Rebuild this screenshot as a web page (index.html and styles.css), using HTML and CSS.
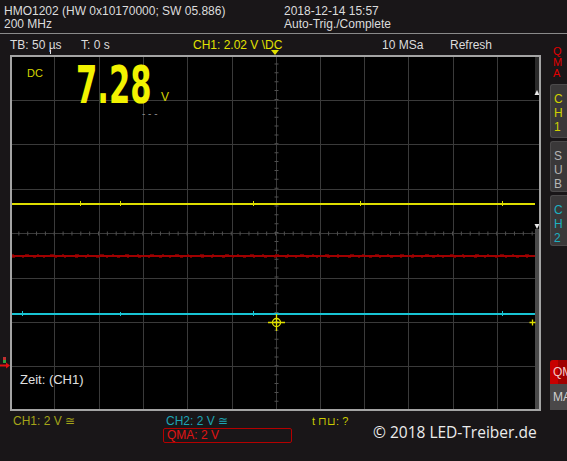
FILE: index.html
```html
<!DOCTYPE html>
<html>
<head>
<meta charset="utf-8">
<link rel="stylesheet" href="styles.css">
</head>
<body>
<div class="screen">
  <header class="info">
    <div class="info-left">
      <div>HMO1202 (HW 0x10170000; SW 05.886)</div>
      <div>200 MHz</div>
    </div>
    <div class="info-right">
      <div>2018-12-14 15:57</div>
      <div>Auto-Trig./Complete</div>
    </div>
  </header>
  <div class="body">
    <div class="content">
      <div class="status">
        <span class="s-tb">TB: 50 µs</span>
        <span class="s-t">T: 0 s</span>
        <span class="s-ch1">CH1: 2.02 V \DC</span>
        <span class="s-msa">10 MSa</span>
        <span class="s-ref">Refresh</span>
        <span class="mark-white"></span>
        <span class="mark-trig"></span>
      </div>
      <div class="scope-row">
        <div class="gutter-left">
          <svg class="gnd-marker" width="10" height="14" viewBox="0 0 10 14">
            <rect x="3" y="0" width="3" height="3" fill="#c03030"/>
            <rect x="3" y="3" width="3" height="3" fill="#30a040"/>
            <path d="M0 8.5 H7" stroke="#e01010" stroke-width="2"/>
            <path d="M6 5.5 L10 8.5 L6 11.5 Z" fill="#e01010"/>
          </svg>
        </div>
        <div class="grat">
          <svg class="grid" width="531" height="356" viewBox="0 0 531 356">
            <rect x="0" y="0" width="531" height="356" fill="#000"/>
            <g stroke="#3a3a3a" stroke-width="1">
              <path d="M44.5 2V354M89.5 2V354M133.5 2V354M177.5 2V354M222.5 2V354M310.5 2V354M354.5 2V354M398.5 2V354M443.5 2V354M487.5 2V354"/>
              <path d="M2 45.5H529M2 89.5H529M2 134.5H529M2 223.5H529M2 267.5H529M2 311.5H529"/>
              <path d="M266.5 2V354M2 178.5H529"/>
            </g>
            <g stroke="#505050">
              <path d="M0 178.5H531" stroke-width="4" stroke-dasharray="1 7.85" stroke-dashoffset="0.5"/>
              <path d="M266.5 0V356" stroke-width="4" stroke-dasharray="1 7.88" stroke-dashoffset="0.5"/>
            </g>
            <!-- right scroll strip -->
            <rect x="525" y="2" width="4" height="36" fill="#2a2a2a"/>
            <path d="M524.5 40 L527 35 L529.5 40 Z" fill="#e8e8e8"/>
            <path d="M524.5 169 L527 174 L529.5 169 Z" fill="#e8e8e8"/>
            <rect x="525" y="174" width="4" height="180" fill="#4a4a4a"/>
            <!-- traces -->
            <path d="M2 149H525" stroke="#dede00" stroke-width="2"/>
            <g stroke="#dede00" stroke-width="1">
              <path d="M70.5 146V151M110.5 146V151M243.5 146V151M350.5 146V151M492.5 146V151"/>
            </g>
            <path d="M2 201H525" stroke="#a00000" stroke-width="2"/>
            <path d="M2 202.5H525" stroke="#6a0000" stroke-width="1" stroke-dasharray="3 7 2 9"/>
            <path d="M2 199.5H525" stroke="#680000" stroke-width="1" stroke-dasharray="2 11 4 8"/>
            <path d="M2 259H525" stroke="#18c4d4" stroke-width="2"/>
            <g stroke="#18c4d4" stroke-width="1">
              <path d="M12.5 256V261M243.5 256V261M492.5 256V261M110.5 257V261"/>
            </g>
            <!-- trigger crosshair -->
            <g stroke="#e0e000" stroke-width="1.3" fill="none">
              <circle cx="266.5" cy="267.5" r="4"/>
              <path d="M258 267.5H275M266.5 259V276"/>
            </g>
            <path d="M519.5 267.5H525.5M522.5 264.5V270.5" stroke="#e0e000" stroke-width="1.3"/>
            <!-- border -->
            <rect x="1" y="1" width="529" height="354" fill="none" stroke="#a4a4a4" stroke-width="2"/>
          </svg>
          <div class="ov dc">DC</div>
          <div class="ov digits">7.28</div>
          <div class="ov unit">V</div>
          <div class="ov dashes">- - -</div>
          <div class="ov zeit">Zeit: (CH1)</div>
        </div>
        <div class="gutter-right"></div>
      </div>
      <footer class="foot">
        <div class="fcol1">
          <div class="f-ch1">CH1: 2 V ≅</div>
        </div>
        <div class="fcol2">
          <div class="f-ch2">CH2: 2 V ≅</div>
          <div class="f-qma">QMA: 2 V</div>
        </div>
        <div class="fcol3">
          <div class="f-t">t ⊓⊔: ?</div>
          <div class="f-copy">© 2018 LED-Treiber.de</div>
        </div>
      </footer>
    </div>
    <aside class="side">
      <div class="qma-v">Q<br>M<br>A</div>
      <div class="sbtn sbtn-ch1">C<br>H<br>1</div>
      <div class="sbtn sbtn-sub">S<br>U<br>B</div>
      <div class="sbtn sbtn-ch2">C<br>H<br>2</div>
      <div class="sbtn-qm">QM</div>
      <div class="sbtn-ma">MA</div>
    </aside>
  </div>
</div>
</body>
</html>
```

FILE: styles.css
```css
html, body {
  margin: 0;
  padding: 0;
  background: #191618;
}

.screen {
  width: 567px;
  height: 461px;
  overflow: hidden;
  background: #191618;
  font-family: "Liberation Sans", Arial, sans-serif;
  color: #d8d8d8;
}

.info {
  display: flex;
  height: 34px;
  box-sizing: border-box;
  border-bottom: 1px solid #8a8a8a;
  padding-top: 5px;
  font-size: 12px;
  line-height: 13px;
  color: #dcdcdc;
}

.info-left {
  width: 280px;
  padding-left: 4px;
}

.body {
  display: flex;
  height: 427px;
}

.content {
  width: 550px;
  display: flex;
  flex-direction: column;
}

.status {
  position: relative;
  display: flex;
  height: 21px;
  box-sizing: border-box;
  padding: 5px 0 0 10px;
  font-size: 12px;
  line-height: 13px;
  color: #dcdcdc;
  white-space: nowrap;
}

.s-tb { width: 71px; }
.s-t { width: 112px; }
.s-ch1 { width: 189px; color: #e2e200; }
.s-msa { width: 68px; }

.mark-white {
  position: absolute;
  left: 50px;
  top: 16px;
  width: 1px;
  height: 4px;
  background: #e0e0e0;
}

.mark-trig {
  position: absolute;
  left: 271px;
  top: 16px;
  width: 0;
  height: 0;
  border-left: 4px solid transparent;
  border-right: 4px solid transparent;
  border-top: 5px solid #e2e200;
}

.scope-row {
  display: flex;
  height: 356px;
}

.gutter-left {
  position: relative;
  width: 10px;
}

.gnd-marker {
  position: absolute;
  left: 0;
  top: 302px;
}

.grat {
  position: relative;
  width: 531px;
  height: 356px;
}

.grid {
  display: block;
}

.gutter-right {
  width: 9px;
}

.ov {
  position: absolute;
  white-space: nowrap;
}

.dc {
  left: 17px;
  top: 12px;
  font-size: 11px;
  line-height: 12px;
  color: #d4d400;
}

.digits {
  left: 66px;
  top: 9px;
  font-family: "DejaVu Sans", sans-serif;
  font-weight: bold;
  font-size: 51px;
  line-height: 44px;
  color: #f2f200;
  transform: scaleX(0.6);
  transform-origin: left top;
}

.unit {
  left: 151px;
  top: 36px;
  font-size: 12px;
  line-height: 13px;
  color: #d4d400;
}

.dashes {
  left: 132px;
  top: 54px;
  font-size: 10px;
  line-height: 10px;
  color: #8a8a8a;
}

.zeit {
  left: 10px;
  top: 317px;
  font-size: 13px;
  line-height: 15px;
  color: #e0e0e0;
}

.foot {
  display: flex;
  height: 50px;
  box-sizing: border-box;
  padding: 4px 0 0 13px;
  font-size: 12px;
  line-height: 13px;
  white-space: nowrap;
}

.fcol1 {
  width: 150px;
  color: #a4a418;
}

.fcol2 {
  width: 129px;
}

.f-ch2 {
  padding-left: 3px;
  color: #1ea4b4;
}

.f-qma {
  height: 15px;
  box-sizing: border-box;
  border: 1px solid #b40000;
  border-radius: 2px;
  padding-left: 3px;
  line-height: 13px;
  color: #e01414;
}

.f-t {
  padding-left: 20px;
  font-size: 11px;
  color: #cccc00;
}

.f-copy {
  margin-top: -5px;
  margin-left: 81px;
  font-family: "Open Sans", sans-serif;
  font-size: 15.5px;
  line-height: 18px;
  color: #ececec;
}

.side {
  width: 17px;
  display: flex;
  flex-direction: column;
  overflow: hidden;
}

.qma-v {
  padding: 12px 0 0 3px;
  font-size: 11px;
  line-height: 11px;
  color: #e00000;
}

.sbtn {
  box-sizing: border-box;
  margin-top: 3px;
  padding: 7px 0 0 3px;
  background: #3a3839;
  border: 1px solid #4c4a4b;
  border-right: none;
  border-radius: 3px 0 0 3px;
  font-size: 12px;
  line-height: 14px;
}

.sbtn-ch1 {
  margin-top: 5px;
  height: 54px;
  color: #d0d000;
}

.sbtn-sub {
  height: 51px;
  color: #b4b4b4;
}

.sbtn-ch2 {
  height: 51px;
  color: #1cb0c0;
}

.sbtn-qm {
  margin-top: 114px;
  height: 24px;
  padding-left: 3px;
  background: linear-gradient(to right, #c80000 0, #c80000 8px, #a00000 8px);
  border-radius: 3px 0 0 0;
  font-size: 12px;
  line-height: 24px;
  color: #f4c8c8;
  white-space: nowrap;
}

.sbtn-ma {
  height: 26px;
  padding-left: 3px;
  background: #4a4849;
  font-size: 12px;
  line-height: 26px;
  color: #d0d0d0;
  white-space: nowrap;
}
```
